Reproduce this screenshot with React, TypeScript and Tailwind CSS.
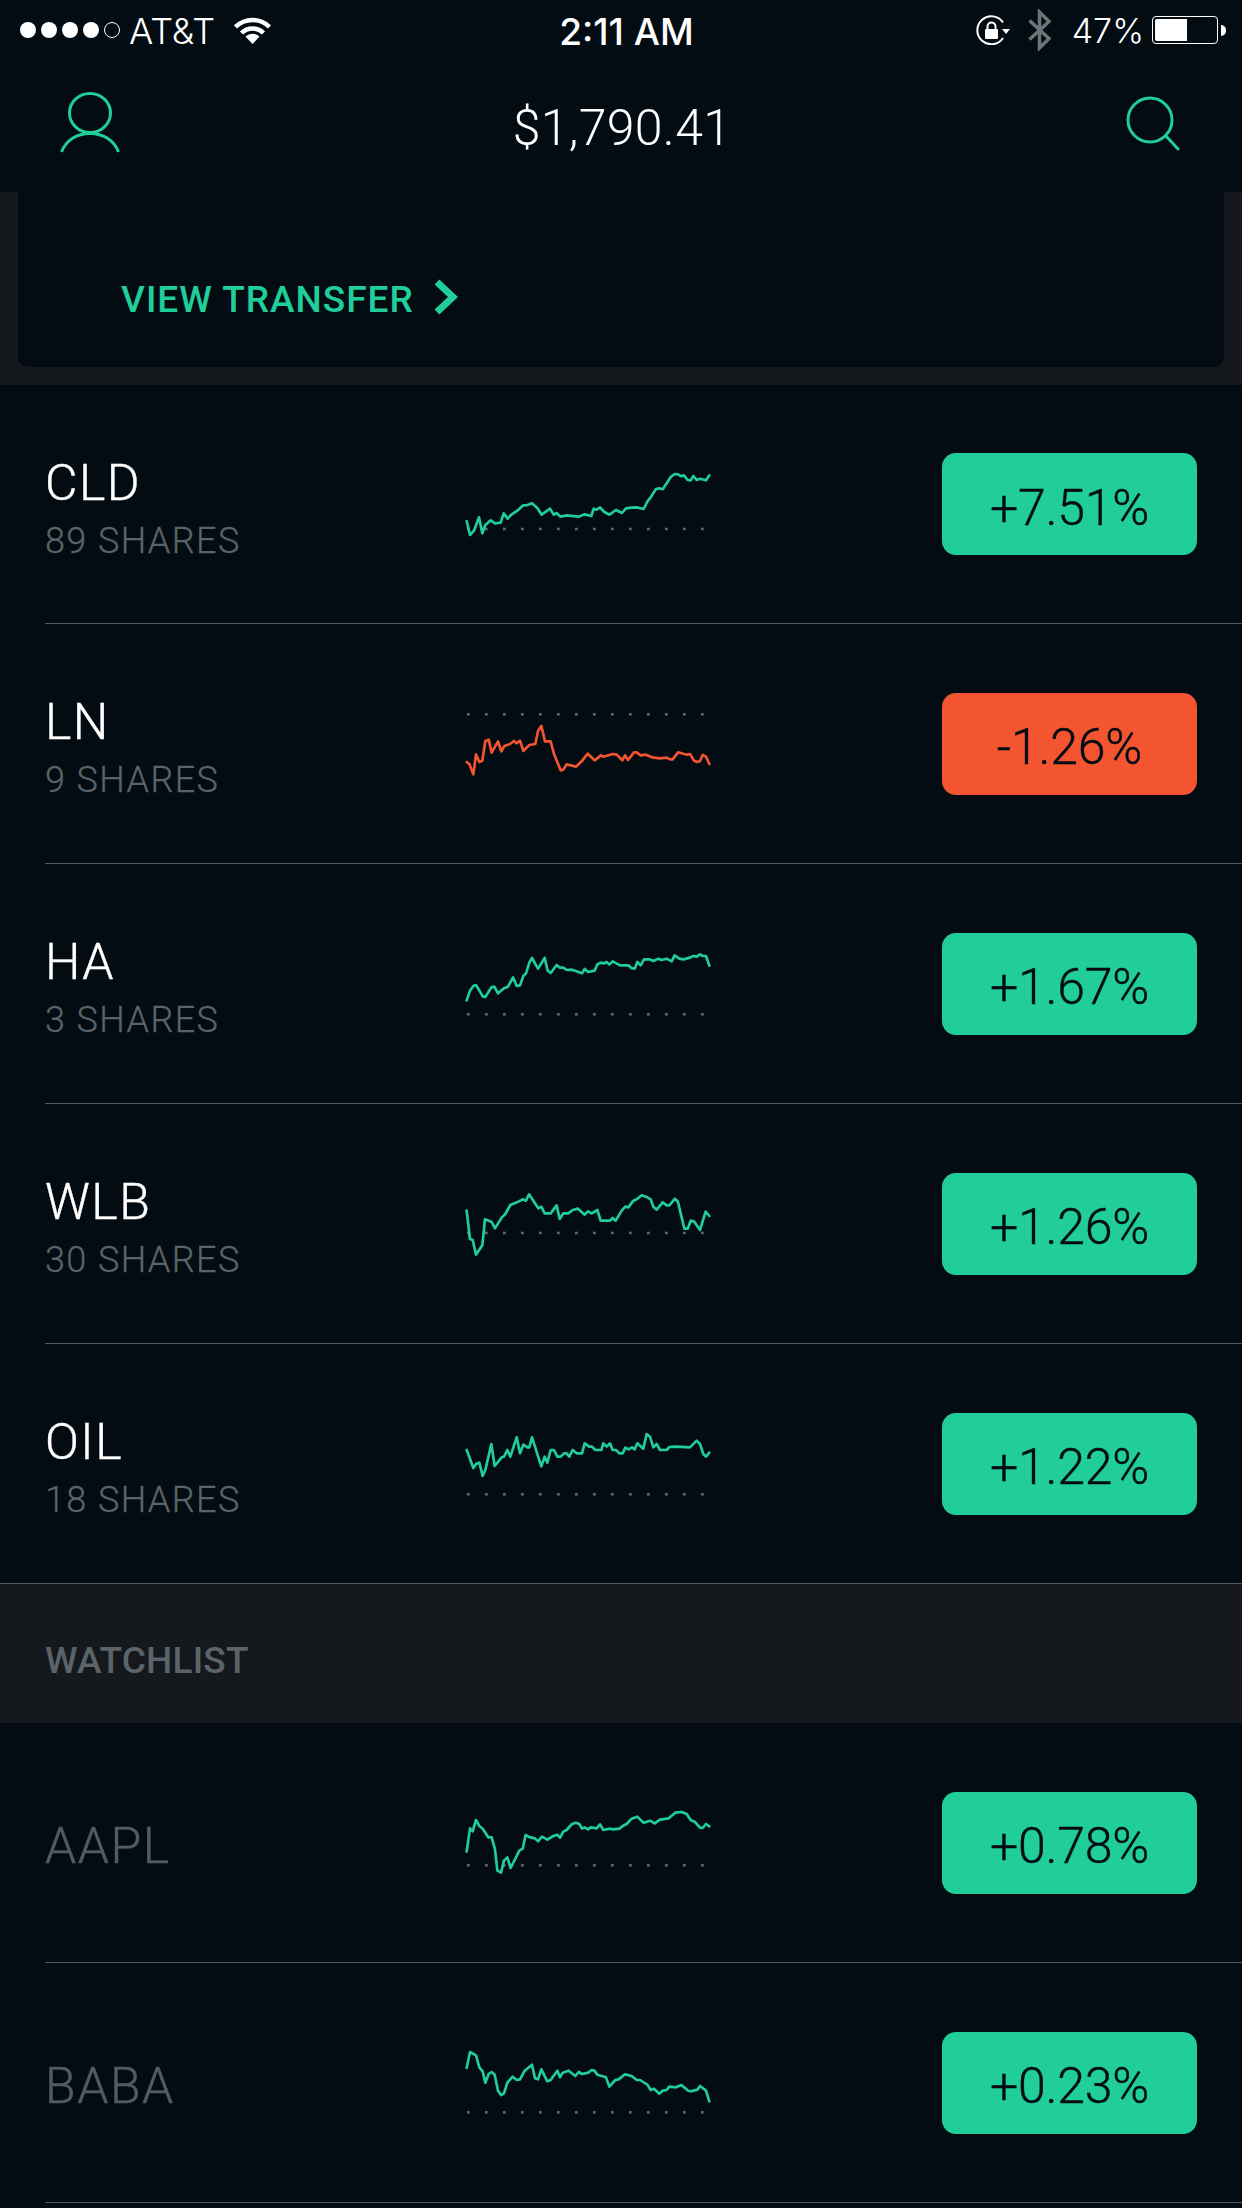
import React from 'react';

type Stock = {
  symbol: string;
  shares?: string;
  change: string;
  down?: boolean;
  dotsY: number;
  shift: number;
  points: string;
};

const holdings: Stock[] = [
  {
    symbol: 'CLD',
    shares: '89 SHARES',
    change: '+7.51%',
    dotsY: 267,
    shift: -3,
    points:
      '80,243 90,285 102,272 117,232 127,280 136,255 152,241 165,250 182,248 191,220 203,236 214,224 232,212 248,197 262,195 276,190 292,204 305,224 330,206 341,224 350,219 361,230 380,226 416,230 434,223 454,228 461,206 470,209 480,202 493,216 508,224 528,210 546,219 558,205 575,203 590,202 611,207 622,185 632,172 648,147 658,145 668,148 680,130 692,111 704,102 714,103 724,109 732,106 743,120 752,121 760,108 770,120 780,116 798,121 808,106',
  },
  {
    symbol: 'LN',
    shares: '9 SHARES',
    change: '-1.26%',
    down: true,
    dotsY: 823,
    shift: -720,
    points:
      '80,966 88,972 100,1003 108,943 118,966 127,962 136,903 146,899 155,938 174,904 184,934 193,918 210,912 222,903 230,910 240,902 250,933 268,915 286,912 294,873 304,858 315,904 332,904 342,942 362,991 370,989 380,973 408,980 425,964 443,941 464,961 483,946 490,950 518,942 530,944 547,961 555,946 564,960 582,937 590,937 602,946 618,944 636,952 660,955 680,953 690,958 698,958 714,937 740,944 750,942 762,962 772,966 780,963 788,945 798,950 808,972',
  },
  {
    symbol: 'HA',
    shares: '3 SHARES',
    change: '+1.67%',
    dotsY: 283,
    shift: 0,
    points:
      '80,241 90,212 100,198 108,195 120,215 128,229 136,231 154,202 163,200 174,220 192,205 204,200 219,172 230,198 240,196 250,168 258,160 268,128 276,114 294,146 314,114 323,152 332,159 350,135 360,143 370,143 380,150 396,149 426,160 434,147 444,156 464,152 472,133 482,128 492,130 500,126 508,134 518,124 540,136 565,136 575,145 585,145 592,126 602,136 612,118 630,118 640,123 655,116 665,120 680,116 695,124 704,106 718,116 730,118 750,113 760,108 770,110 780,103 788,108 798,108 808,137',
  },
  {
    symbol: 'WLB',
    shares: '30 SHARES',
    change: '+1.26%',
    dotsY: 939,
    shift: -720,
    points:
      '80,872 90,957 98,960 108,1004 127,976 135,898 155,906 165,925 185,893 196,882 211,855 235,845 248,838 258,842 267,823 295,865 304,860 314,880 332,880 350,856 359,897 370,880 385,880 398,870 414,866 434,884 444,874 455,880 472,870 482,902 510,902 518,894 527,902 545,872 556,860 565,862 580,842 590,838 605,826 618,830 632,838 640,860 650,869 668,847 680,856 688,856 705,836 714,846 733,926 743,926 752,902 762,904 780,930 797,875 808,888',
  },
  {
    symbol: 'OIL',
    shares: '18 SHARES',
    change: '+1.22%',
    dotsY: 283,
    shift: 0,
    points:
      '80,150 100,204 108,192 118,188 128,228 136,210 154,132 164,198 185,172 192,170 202,150 211,170 230,112 240,160 250,134 262,142 268,142 276,112 304,199 314,170 322,188 332,150 342,150 352,170 362,170 372,160 380,160 388,170 398,150 410,160 426,160 434,130 448,140 456,140 466,150 484,150 490,130 500,140 510,130 518,150 528,150 538,160 548,160 556,143 566,148 576,142 584,148 592,130 610,146 620,102 630,110 640,142 650,132 660,150 680,150 688,141 710,140 750,142 770,122 780,132 790,162 798,170 808,158',
  },
];

const watchlist: Stock[] = [
  {
    symbol: 'AAPL',
    change: '+0.78%',
    dotsY: 256,
    shift: 3,
    points:
      '80,215 90,145 98,154 108,120 118,138 128,146 145,172 155,172 165,208 172,272 183,278 192,242 202,232 212,264 238,212 248,206 257,165 270,172 285,175 294,184 306,170 322,179 340,168 352,164 360,173 370,155 380,150 396,132 408,128 418,132 426,146 434,142 444,148 452,142 470,145 480,133 490,150 510,146 518,148 538,146 548,138 560,132 575,116 592,110 610,128 630,122 644,130 660,119 686,115 706,98 725,96 740,102 752,120 765,126 780,143 788,144 798,132 808,139',
  },
  {
    symbol: 'BABA',
    change: '+0.23%',
    dotsY: 997,
    shift: -717,
    points:
      '80,864 90,816 108,826 118,862 128,874 136,908 146,882 155,876 164,884 174,932 183,945 192,940 202,908 218,890 230,900 240,898 254,872 276,854 285,895 294,898 304,868 322,904 332,900 352,872 360,892 368,878 386,872 406,888 416,876 426,882 445,878 455,870 463,872 472,884 498,892 508,920 526,900 536,898 555,883 575,888 590,900 600,900 622,914 632,930 642,926 658,941 668,932 680,930 688,920 708,922 724,915 745,932 752,934 772,929 780,918 798,932 808,964',
  },
];

const dotColumns = Array.from({ length: 14 }, (_, i) => 85 + i * 54);

const Sparkline: React.FC<{ stock: Stock }> = ({ stock }) => (
  <svg className="w-[300px] h-[240px] shrink-0 self-start" viewBox="0 -168 900 720" fill="none">
    <g transform={`translate(0 ${stock.shift})`}>
      {dotColumns.map((x) => (
        <rect key={x} x={x - 4} y={stock.dotsY - 4} width="8" height="8" fill="#5f686b" />
      ))}
      <polyline
        points={stock.points}
        stroke={stock.down ? '#f45531' : '#21ce99'}
        strokeWidth="8"
        strokeLinejoin="round"
        strokeLinecap="round"
      />
    </g>
  </svg>
);

const ChangePill: React.FC<{ stock: Stock }> = ({ stock }) => (
  <div
    className={`ml-auto mr-[45px] w-[255px] h-[102px] pt-[8px] rounded-[14px] flex items-center justify-center text-[50px] font-light tracking-[-0.2px] [-webkit-text-stroke:0.4px] text-[#030b13] ${
      stock.down ? 'bg-[#f45531]' : 'bg-[#21ce99]'
    }`}
  >
    {stock.change}
  </div>
);

const StatusBar: React.FC = () => (
  <div className="flex items-center h-[60px] text-white font-['Inter',sans-serif] text-[34px]">
    <div className="w-[559px] shrink-0 flex items-center pl-[20px]">
      <div className="flex gap-[5px]">
        <span className="w-[16px] h-[16px] rounded-full bg-white" />
        <span className="w-[16px] h-[16px] rounded-full bg-white" />
        <span className="w-[16px] h-[16px] rounded-full bg-white" />
        <span className="w-[16px] h-[16px] rounded-full bg-white" />
        <span className="w-[16px] h-[16px] rounded-full border border-white" />
      </div>
      <span className="ml-[9px] text-[36px] leading-none font-light pt-[2px]">AT&amp;T</span>
      <svg className="ml-[19px]" width="37" height="27" viewBox="0 0 37 27" fill="none">
        <path d="M1.5 10A24 24 0 0 1 35.5 10" stroke="#fff" strokeWidth="4.5" />
        <path d="M7.5 16A15.5 15.5 0 0 1 29.5 16" stroke="#fff" strokeWidth="4.5" />
        <path d="M18.5 27L11.5 19.5A10 10 0 0 1 25.5 19.5Z" fill="#fff" />
      </svg>
    </div>
    <span className="w-[135px] text-center text-[37px] leading-none whitespace-nowrap pt-[2px] [font-weight:450]">
      2:11 AM
    </span>
    <div className="flex-1 flex items-center justify-end pr-[16px]">
      <svg width="34" height="30" viewBox="0 0 34 30" fill="none">
        <path d="M27 7.5A14 14 0 1 0 27 23" stroke="#fff" strokeWidth="2" />
        <rect x="9" y="14" width="13" height="10" rx="1" fill="#fff" />
        <path d="M11.5 14V11.5a4 4 0 0 1 8 0V14" stroke="#fff" strokeWidth="2" />
        <path d="M26 14h8l-4 5z" fill="#fff" />
      </svg>
      <svg className="ml-[18px]" width="24" height="42" viewBox="0 0 24 42" fill="none">
        <path d="M1.5 11.5L21 29.5 11.5 39V3L21 12.5 1.5 30.5" stroke="#6f7476" strokeWidth="3.5" />
      </svg>
      <span className="ml-[20px] font-light">47%</span>
      <div className="ml-[8px] w-[66px] h-[28px] rounded-[4px] border border-white p-[2px]">
        <div className="w-[32px] h-full bg-white rounded-l-[2px]" />
      </div>
      <div className="ml-[3px] w-[5px] h-[11px] rounded-r-full bg-white" />
    </div>
  </div>
);

export default function App() {
  return (
    <div className="w-[1242px] h-[2208px] overflow-hidden bg-[#030b13] font-['Roboto',sans-serif]">
      <StatusBar />

      {/* Balance bar */}
      <div className="flex items-center justify-between h-[132px] pl-[60px] pr-[62px]">
        <svg className="mb-[7px]" width="60" height="61" viewBox="0 0 60 61" fill="none">
          <ellipse cx="30" cy="21" rx="20.5" ry="19.5" stroke="#21ce99" strokeWidth="3" />
          <path d="M1.5 60C6 48 17 41.5 30 41.5S54 48 58.5 60" stroke="#21ce99" strokeWidth="3" />
        </svg>
        <span className="mr-[2px] text-[50px] leading-none font-light tracking-[0.3px] text-white mt-[3px]">
          $1,790.41
        </span>
        <svg className="mb-[6px]" width="54" height="56" viewBox="0 0 54 56" fill="none">
          <circle cx="24" cy="25" r="22" stroke="#21ce99" strokeWidth="3" />
          <path d="M40 41L52 54" stroke="#21ce99" strokeWidth="3" strokeLinecap="round" />
        </svg>
      </div>

      {/* Transfer card */}
      <div className="bg-[#15181d] px-[18px] pb-[18px]">
        <div className="h-[175px] bg-[#030b13] rounded-b-[10px] pl-[103px] pt-[83px] flex items-start">
          <span className="text-[37px] leading-[50px] tracking-[1px] font-medium text-[#21ce99]">VIEW TRANSFER</span>
          <svg className="ml-[20px] mt-[4px]" width="24" height="36" viewBox="0 0 24 36" fill="none">
            <path d="M3 3L19 18 3 33" stroke="#21ce99" strokeWidth="7" />
          </svg>
        </div>
      </div>

      <div>
        {holdings.map((stock) => (
          <div
            key={stock.symbol}
            className="flex items-center h-[240px] first:h-[239px] border-b border-[#535d61] ml-[45px] last:ml-0 last:pl-[45px]"
          >
            <div className="w-[395px] shrink-0 pt-[10px]">
              <div className="text-[50px] leading-[50px] font-light tracking-[1.5px] [-webkit-text-stroke:0.4px] text-white">
                {stock.symbol}
              </div>
              <div className="mt-[13px] text-[36px] leading-[40px] font-light tracking-[1.4px] [-webkit-text-stroke:0.3px] text-[#5a6468]">
                {stock.shares}
              </div>
            </div>
            <Sparkline stock={stock} />
            <ChangePill stock={stock} />
          </div>
        ))}
      </div>

      {/* Watchlist header */}
      <div className="flex items-center h-[139px] pl-[45px] pt-[14px] bg-[#15181d] text-[37px] font-medium tracking-[0.2px] text-[#5a6469]">
        WATCHLIST
      </div>

      <div>
        {watchlist.map((stock) => (
          <div key={stock.symbol} className="flex items-center h-[240px] ml-[45px] border-b border-[#535d61]">
            <div className="w-[395px] shrink-0 pt-[6px] text-[50px] leading-[50px] font-light tracking-[1.5px] [-webkit-text-stroke:0.4px] text-[#515c62]">
              {stock.symbol}
            </div>
            <Sparkline stock={stock} />
            <ChangePill stock={stock} />
          </div>
        ))}
      </div>
    </div>
  );
}
